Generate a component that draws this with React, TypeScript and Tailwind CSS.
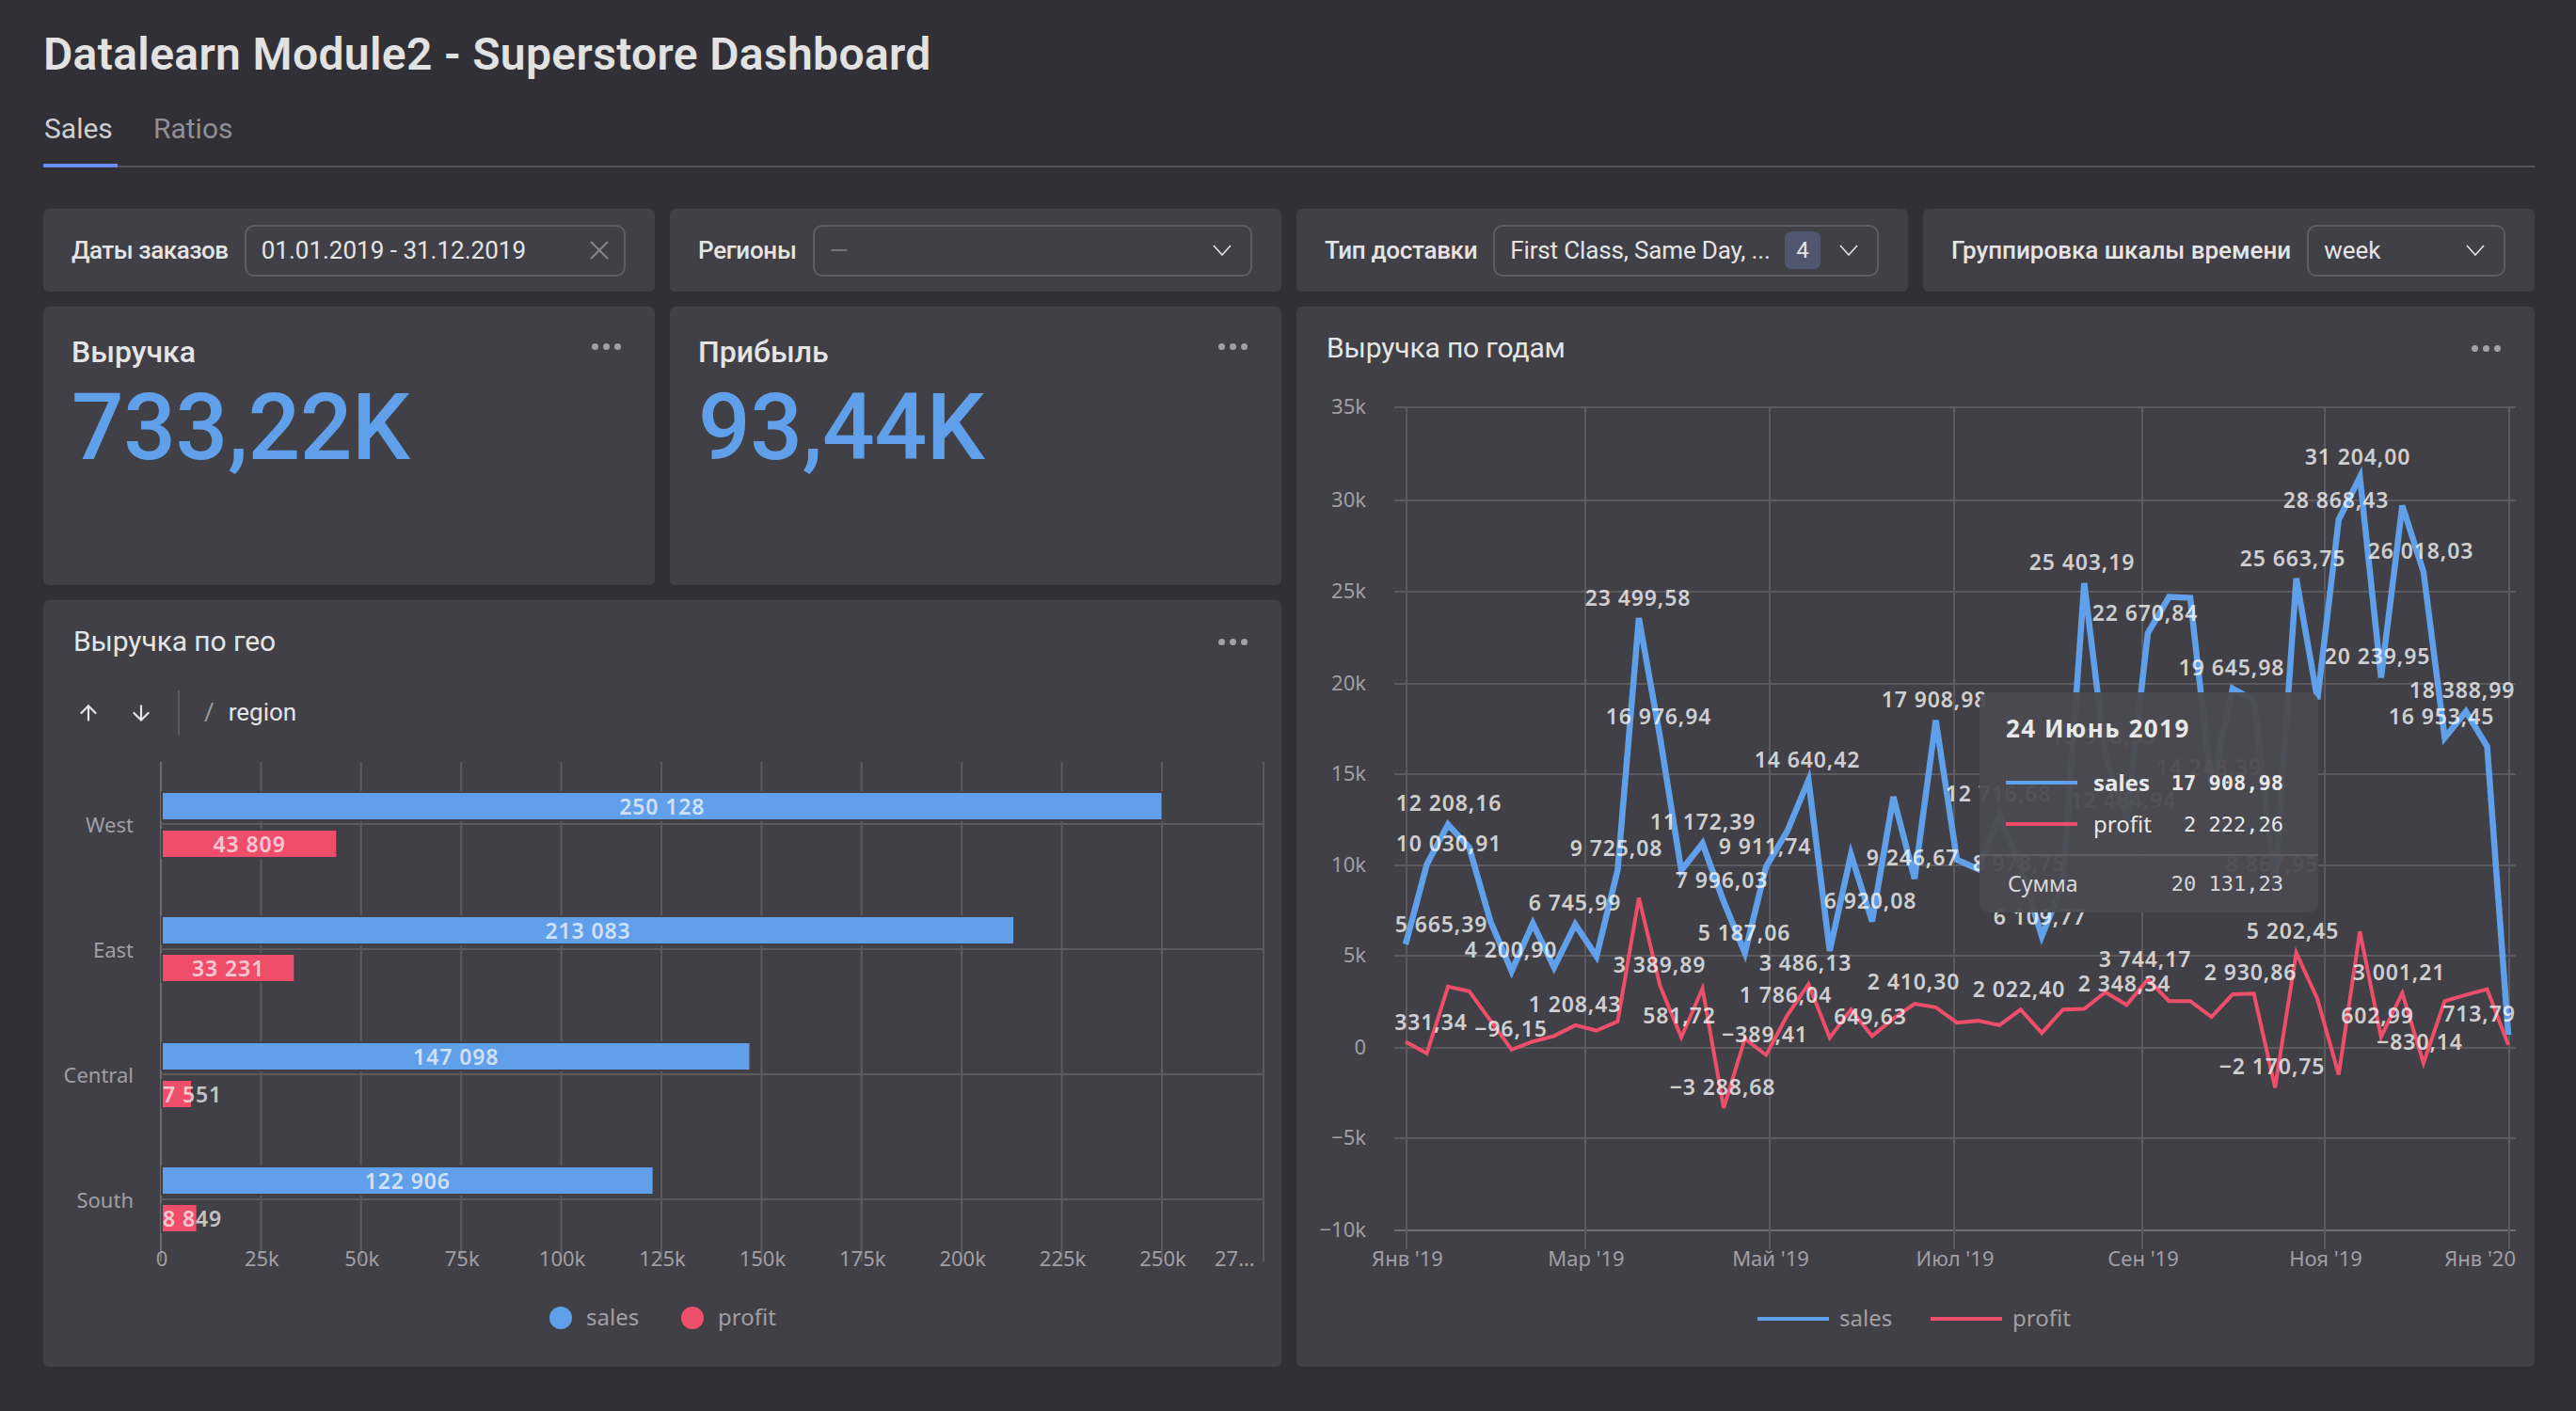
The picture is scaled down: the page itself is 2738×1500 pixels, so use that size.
import { ArrowDown, ArrowUp } from "lucide-react";

const sales = [
  5665, 10030, 12208, 10950, 6915, 4200, 6800, 4400, 6745, 5000, 9725, 23499, 16976, 9700, 11172, 7996, 5187, 9911,
  11850, 14640, 5300, 10580, 6920, 13720, 9246, 17908, 10280, 9770, 12716, 9900, 6109, 9000, 25403, 15918, 12484,
  22670, 24650, 24600, 14248, 19645, 19000, 8867, 25663, 19050, 28868, 31204, 20239, 29640, 26018, 16953, 18388,
  16480, 713,
];
const profit = [
  331, -300, 3350, 3100, 1500, -96, 350, 650, 1240, 950, 1450, 8200, 3389, 581, 3250, -3288, 500, -389, 1786, 3486,
  550, 2100, 649, 1600, 2410, 2222, 1382, 1484, 1240, 2094, 813, 2094, 2135, 3050, 2348, 3744, 2560, 2560, 1687, 2930,
  2968, -2170, 5202, 2660, -1460, 6360, 602, 3001, -830, 2560, 2900, 3212, 170,
];

const toX = (i: number) => 1494 + i * 22.54;
const toY = (v: number) => 1114 - (v / 5000) * 97.25;
const toPoints = (d: number[]) => d.map((v, i) => `${toX(i)},${toY(v)}`).join(" ");

const lineLabels: [string, number, number][] = [
  ["12 208,16", 1540, 854],
  ["10 030,91", 1540, 897],
  ["5 665,39", 1532, 983],
  ["4 200,90", 1606, 1010],
  ["6 745,99", 1674, 960],
  ["9 725,08", 1718, 902],
  ["23 499,58", 1741, 636],
  ["16 976,94", 1763, 762],
  ["11 172,39", 1810, 874],
  ["7 996,03", 1830, 936],
  ["5 187,06", 1854, 992],
  ["9 911,74", 1876, 900],
  ["14 640,42", 1921, 808],
  ["6 920,08", 1988, 958],
  ["9 246,67", 2033, 912],
  ["17 908,98", 2056, 744],
  ["12 716,68", 2124, 844],
  ["8 978,75", 2146, 918],
  ["6 109,77", 2168, 975],
  ["15 918,55", 2236, 783],
  ["25 403,19", 2213, 598],
  ["12 484,94", 2257, 851],
  ["22 670,84", 2280, 652],
  ["14 248,39", 2348, 816],
  ["19 645,98", 2372, 710],
  ["8 867,95", 2415, 919],
  ["25 663,75", 2437, 594],
  ["20 239,95", 2527, 698],
  ["28 868,43", 2483, 532],
  ["31 204,00", 2506, 486],
  ["26 018,03", 2573, 586],
  ["16 953,45", 2595, 762],
  ["18 388,99", 2617, 734],
  ["713,79", 2635, 1078],
  ["331,34", 1521, 1087],
  ["−96,15", 1606, 1094],
  ["1 208,43", 1674, 1068],
  ["3 389,89", 1764, 1026],
  ["581,72", 1785, 1080],
  ["−3 288,68", 1831, 1156],
  ["1 786,04", 1898, 1058],
  ["3 486,13", 1919, 1024],
  ["−389,41", 1876, 1100],
  ["649,63", 1988, 1081],
  ["2 410,30", 2034, 1044],
  ["2 022,40", 2146, 1052],
  ["2 348,34", 2258, 1046],
  ["3 744,17", 2280, 1020],
  ["2 930,86", 2392, 1034],
  ["5 202,45", 2437, 990],
  ["−2 170,75", 2415, 1134],
  ["3 001,21", 2550, 1034],
  ["602,99", 2527, 1080],
  ["−830,14", 2572, 1108],
];

const yTicks: [string, number][] = [
  ["35k", 433],
  ["30k", 532],
  ["25k", 629],
  ["20k", 727],
  ["15k", 823],
  ["10k", 920],
  ["5k", 1016],
  ["0", 1114],
  ["−5k", 1210],
  ["−10k", 1308],
];
const xTicks: [string, number][] = [
  ["Янв '19", 1495],
  ["Мар '19", 1685],
  ["Май '19", 1881],
  ["Июл '19", 2077],
  ["Сен '19", 2277],
  ["Ноя '19", 2471],
  ["Янв '20", 2667],
];

const geoRows = [
  { name: "West", y: 842, rowLine: 876, sales: 250128, salesText: "250 128", profit: 43809, profitText: "43 809" },
  { name: "East", y: 974, rowLine: 1009, sales: 213083, salesText: "213 083", profit: 33231, profitText: "33 231" },
  { name: "Central", y: 1108, rowLine: 1142, sales: 147098, salesText: "147 098", profit: 7551, profitText: "7 551" },
  { name: "South", y: 1240, rowLine: 1275, sales: 122906, salesText: "122 906", profit: 8849, profitText: "8 849" },
];
const geoTicks = ["0", "25k", "50k", "75k", "100k", "125k", "150k", "175k", "200k", "225k", "250k"];
const geoX = (v: number) => 172 + (v / 250000) * 1063;

function Dots() {
  return (
    <div className="flex gap-[5px]">
      <span className="w-[7px] h-[7px] rounded-full bg-[#a09fa4]" />
      <span className="w-[7px] h-[7px] rounded-full bg-[#a09fa4]" />
      <span className="w-[7px] h-[7px] rounded-full bg-[#a09fa4]" />
    </div>
  );
}

function Chevron() {
  return (
    <svg width="20" height="12" viewBox="0 0 20 12" className="shrink-0">
      <polyline points="1,1 10,11 19,1" fill="none" stroke="#e2e2e3" strokeWidth="1.6" />
    </svg>
  );
}

function FilterBox({ label, track, children }: { label: string; track: string; children: React.ReactNode }) {
  return (
    <div className="bg-[#414046] rounded-[6px] flex items-center pl-[30px] pr-[31px] gap-[17px]">
      <span className={`text-[26px] font-medium text-[#e5e5e6] whitespace-nowrap ${track}`}>{label}</span>
      {children}
    </div>
  );
}

export default function App() {
  return (
    <div className="w-[2738px] h-[1500px] overflow-hidden bg-[#313036] pl-[46px] pr-[44px] font-['Roboto',sans-serif] text-[#e5e5e6]">
      <h1 className="pt-[30px] h-[84px] text-[48px] leading-[56px] font-semibold text-[#e2e2e2] tracking-[0.35px]">
        Datalearn Module2 - Superstore Dashboard
      </h1>

      <div className="h-[94px] border-b-2 border-[#55545a] flex gap-[38px] mb-[44px] pt-[32px]">
        <div className="relative h-[60px] w-[79px] text-[30px] leading-[42px] text-[#cfcfd0] pl-[1px]">
          Sales
          <div className="absolute left-0 right-0 bottom-[-2px] h-[4px] bg-[#6b8cf7]" />
        </div>
        <div className="text-[30px] leading-[42px] text-[#908f94]">Ratios</div>
      </div>

      <div className="grid grid-cols-4 grid-rows-[88px_296px_815px] gap-[16px]">
        <FilterBox label="Даты заказов" track="tracking-[-0.45px]">
          <div className="flex-1 h-[55px] rounded-[10px] border-2 border-[#5e5d63] flex items-center justify-between pl-[16px] pr-[16px] text-[26px] whitespace-nowrap">
            <span>01.01.2019 - 31.12.2019</span>
            <svg width="20" height="20" viewBox="0 0 20 20">
              <path d="M1 1 L19 19 M19 1 L1 19" stroke="#86858a" strokeWidth="2" />
            </svg>
          </div>
        </FilterBox>

        <FilterBox label="Регионы" track="tracking-[-0.3px]">
          <div className="flex-1 h-[55px] rounded-[10px] border-2 border-[#5e5d63] flex items-center justify-between pl-[16px] pr-[20px] text-[26px]">
            <span className="text-[#77767b]">—</span>
            <Chevron />
          </div>
        </FilterBox>

        <FilterBox label="Тип доставки" track="tracking-[-0.3px]">
          <div className="flex-1 h-[55px] rounded-[10px] border-2 border-[#5e5d63] flex items-center pl-[16px] pr-[20px] text-[26px] whitespace-nowrap">
            <span className="tracking-[-0.15px]">First Class, Same Day, ...</span>
            <span className="ml-auto w-[38px] h-[40px] rounded-[7px] bg-[#50566f] flex items-center justify-center text-[24px]">
              4
            </span>
            <div className="ml-[20px]">
              <Chevron />
            </div>
          </div>
        </FilterBox>

        <FilterBox label="Группировка шкалы времени" track="tracking-[0px]">
          <div className="flex-1 h-[55px] rounded-[10px] border-2 border-[#5e5d63] flex items-center justify-between pl-[16px] pr-[20px] text-[26px]">
            <span>week</span>
            <Chevron />
          </div>
        </FilterBox>

        <div className="bg-[#414046] rounded-[6px] pl-[30px] pr-[36px] pt-[28px]">
          <div className="flex justify-between">
            <span className="text-[32px] leading-[40px] font-medium">Выручка</span>
            <div className="pt-[11px]">
              <Dots />
            </div>
          </div>
          <div className="text-[98px] leading-[110px] font-medium text-[#60a0ea] mt-[6px] tracking-[-0.4px]">733,22K</div>
        </div>

        <div className="bg-[#414046] rounded-[6px] pl-[30px] pr-[36px] pt-[28px]">
          <div className="flex justify-between">
            <span className="text-[32px] leading-[40px] font-medium">Прибыль</span>
            <div className="pt-[11px]">
              <Dots />
            </div>
          </div>
          <div className="text-[98px] leading-[110px] font-medium text-[#60a0ea] mt-[6px] tracking-[-0.4px]">93,44K</div>
        </div>

        <div className="relative col-span-2 row-span-2 bg-[#414046] rounded-[6px] overflow-hidden">
          <div className="h-[94px] pl-[32px] pr-[36px] flex items-start justify-between pt-[24px]">
            <span className="text-[30px] leading-[40px] tracking-[-0.15px]">Выручка по годам</span>
            <div className="pt-[17px]">
              <Dots />
            </div>
          </div>
          <svg width="1316" height="1033" viewBox="1378 420 1316 1033" className="block">
            {yTicks.map(([t, y]) => (
              <line key={t} x1="1482" x2="2674" y1={y} y2={y} stroke={t === "−10k" ? "#6e6d72" : "#5b5a5f"} strokeWidth="2" />
            ))}
            {xTicks.map(([t, x]) => (
              <line key={t} x1={x} x2={x} y1="433" y2="1328" stroke="#5b5a5f" strokeWidth="2" />
            ))}
            {yTicks.map(([t, y]) => (
              <text key={t} x="1452" y={y + 7} textAnchor="end" fill="#a09fa4" className="font-['Noto_Sans'] text-[22px]">
                {t}
              </text>
            ))}
            {xTicks.map(([t, x], i) => (
              <text
                key={t}
                x={i === 6 ? 2674 : x + 1}
                y="1346"
                textAnchor={i === 6 ? "end" : "middle"}
                fill="#a09fa4"
                className="font-['Noto_Sans'] text-[22px]"
              >
                {t}
              </text>
            ))}
            <polyline points={toPoints(sales)} fill="none" stroke="#60a0ea" strokeWidth="6.5" strokeLinejoin="miter" />
            <polyline points={toPoints(profit)} fill="none" stroke="#ee4e6a" strokeWidth="4" strokeLinejoin="miter" />
            {lineLabels.map(([t, x, y]) => (
              <text
                key={t}
                x={x}
                y={y + 8}
                textAnchor="middle"
                fill="#ffffff"
                fillOpacity="0.75"
                className="font-['Noto_Sans'] font-semibold text-[23px] tracking-[0.9px]"
              >
                {t}
              </text>
            ))}
            <line x1="1868" x2="1944" y1="1402" y2="1402" stroke="#60a0ea" strokeWidth="4" />
            <text x="1955" y="1410" fill="#a09fa4" className="font-['Noto_Sans'] text-[24px]">
              sales
            </text>
            <line x1="2052" x2="2128" y1="1402" y2="1402" stroke="#ee4e6a" strokeWidth="4" />
            <text x="2139" y="1410" fill="#a09fa4" className="font-['Noto_Sans'] text-[24px]">
              profit
            </text>
          </svg>

          {/* hover tooltip */}
          <div className="absolute left-[726px] top-[410px] w-[360px] h-[234px] rounded-[10px] bg-[#4b4a50]/95 pl-[28px] pr-[37px] font-['Noto_Sans']">
            <div className="pt-[23px] h-[74px] text-[26px] leading-[30px] font-bold tracking-[1.5px] text-[#e8e8e9]">
              24 Июнь 2019
            </div>
            <div className="h-[44px] flex items-center">
              <span className="w-[76px] h-[4px] bg-[#60a0ea]" />
              <span className="ml-[17px] text-[24px] font-bold text-[#e8e8e9]">sales</span>
              <span className="ml-auto text-[22px] font-['DejaVu_Sans_Mono'] font-bold text-[#e8e8e9]">17 908,98</span>
            </div>
            <div className="h-[44px] flex items-center">
              <span className="w-[76px] h-[4px] bg-[#ee4e6a]" />
              <span className="ml-[17px] text-[24px] text-[#e8e8e9]">profit</span>
              <span className="ml-auto text-[22px] font-['DejaVu_Sans_Mono'] text-[#e8e8e9]">2 222,26</span>
            </div>
            <div className="-ml-[28px] -mr-[37px] mt-[10px] border-t-2 border-[#5f5e63]" />
            <div className="h-[58px] flex items-center justify-between text-[#d8d8da]">
              <span className="text-[23px] pl-[2px]">Сумма</span>
              <span className="text-[22px] font-['DejaVu_Sans_Mono']">20 131,23</span>
            </div>
          </div>
        </div>

        <div className="col-span-2 bg-[#414046] rounded-[6px] overflow-hidden">
          <div className="h-[89px] pl-[32px] pr-[36px] flex items-start justify-between pt-[24px]">
            <span className="text-[30px] leading-[40px] tracking-[-0.1px]">Выручка по гео</span>
            <div className="pt-[17px]">
              <Dots />
            </div>
          </div>
          <div className="h-[73px] flex items-start pl-[35px]">
            <div className="h-[47px] flex items-center gap-[30px] pr-[26px] border-r-2 border-[#5b5a5f] mt-[7px]">
              <ArrowUp size={26} color="#e5e5e6" strokeWidth={2} />
              <ArrowDown size={26} color="#e5e5e6" strokeWidth={2} />
            </div>
            <span className="ml-[26px] mt-[14px] text-[26px] leading-[32px] text-[#9c9ba0]">/</span>
            <span className="ml-[15px] mt-[14px] text-[26px] leading-[32px]">region</span>
          </div>
          <svg width="1316" height="653" viewBox="46 800 1316 653" className="block">
            {geoTicks.map((t, i) => (
              <line key={t} x1={171 + i * 106.4} x2={171 + i * 106.4} y1="810" y2="1341" stroke={i === 0 ? "#6e6d72" : "#5b5a5f"} strokeWidth="2" />
            ))}
            <line x1="1343" x2="1343" y1="810" y2="1341" stroke="#5b5a5f" strokeWidth="2" />
            {geoRows.map((r) => (
              <line key={r.name} x1="171" x2="1343" y1={r.rowLine} y2={r.rowLine} stroke="#5b5a5f" strokeWidth="2" />
            ))}
            {geoRows.map((r) => (
              <g key={r.name}>
                <text x="142" y={r.rowLine + 9} textAnchor="end" fill="#a09fa4" className="font-['Noto_Sans'] text-[22px]">
                  {r.name}
                </text>
                <rect x="172" y={r.y} width={geoX(r.sales) - 172} height="30" fill="#60a0ea" stroke="#414046" strokeWidth="2" />
                <rect x="172" y={r.y + 40} width={geoX(r.profit) - 172} height="30" fill="#ee4e6a" stroke="#414046" strokeWidth="2" />
                <text
                  x={(geoX(r.sales) + 172) / 2}
                  y={r.y + 24}
                  textAnchor="middle"
                  fill="#ffffff"
                  fillOpacity="0.7"
                  className="font-['Noto_Sans'] font-semibold text-[23px] tracking-[0.9px]"
                >
                  {r.salesText}
                </text>
                <text
                  x={r.profit > 20000 ? (geoX(r.profit) + 172) / 2 : 173}
                  y={r.y + 64}
                  textAnchor={r.profit > 20000 ? "middle" : "start"}
                  fill="#ffffff"
                  fillOpacity="0.7"
                  className="font-['Noto_Sans'] font-semibold text-[23px] tracking-[0.9px]"
                >
                  {r.profitText}
                </text>
              </g>
            ))}
            {geoTicks.map((t, i) => (
              <text key={t} x={172 + i * 106.4} y="1346" textAnchor="middle" fill="#a09fa4" className="font-['Noto_Sans'] text-[22px]">
                {t}
              </text>
            ))}
            <text x="1291" y="1346" fill="#a09fa4" className="font-['Noto_Sans'] text-[22px]">
              27…
            </text>
            <circle cx="596" cy="1401" r="12" fill="#60a0ea" />
            <text x="623" y="1409" fill="#a09fa4" className="font-['Noto_Sans'] text-[24px]">
              sales
            </text>
            <circle cx="736" cy="1401" r="12" fill="#ee4e6a" />
            <text x="763" y="1409" fill="#a09fa4" className="font-['Noto_Sans'] text-[24px]">
              profit
            </text>
          </svg>
        </div>
      </div>
    </div>
  );
}
